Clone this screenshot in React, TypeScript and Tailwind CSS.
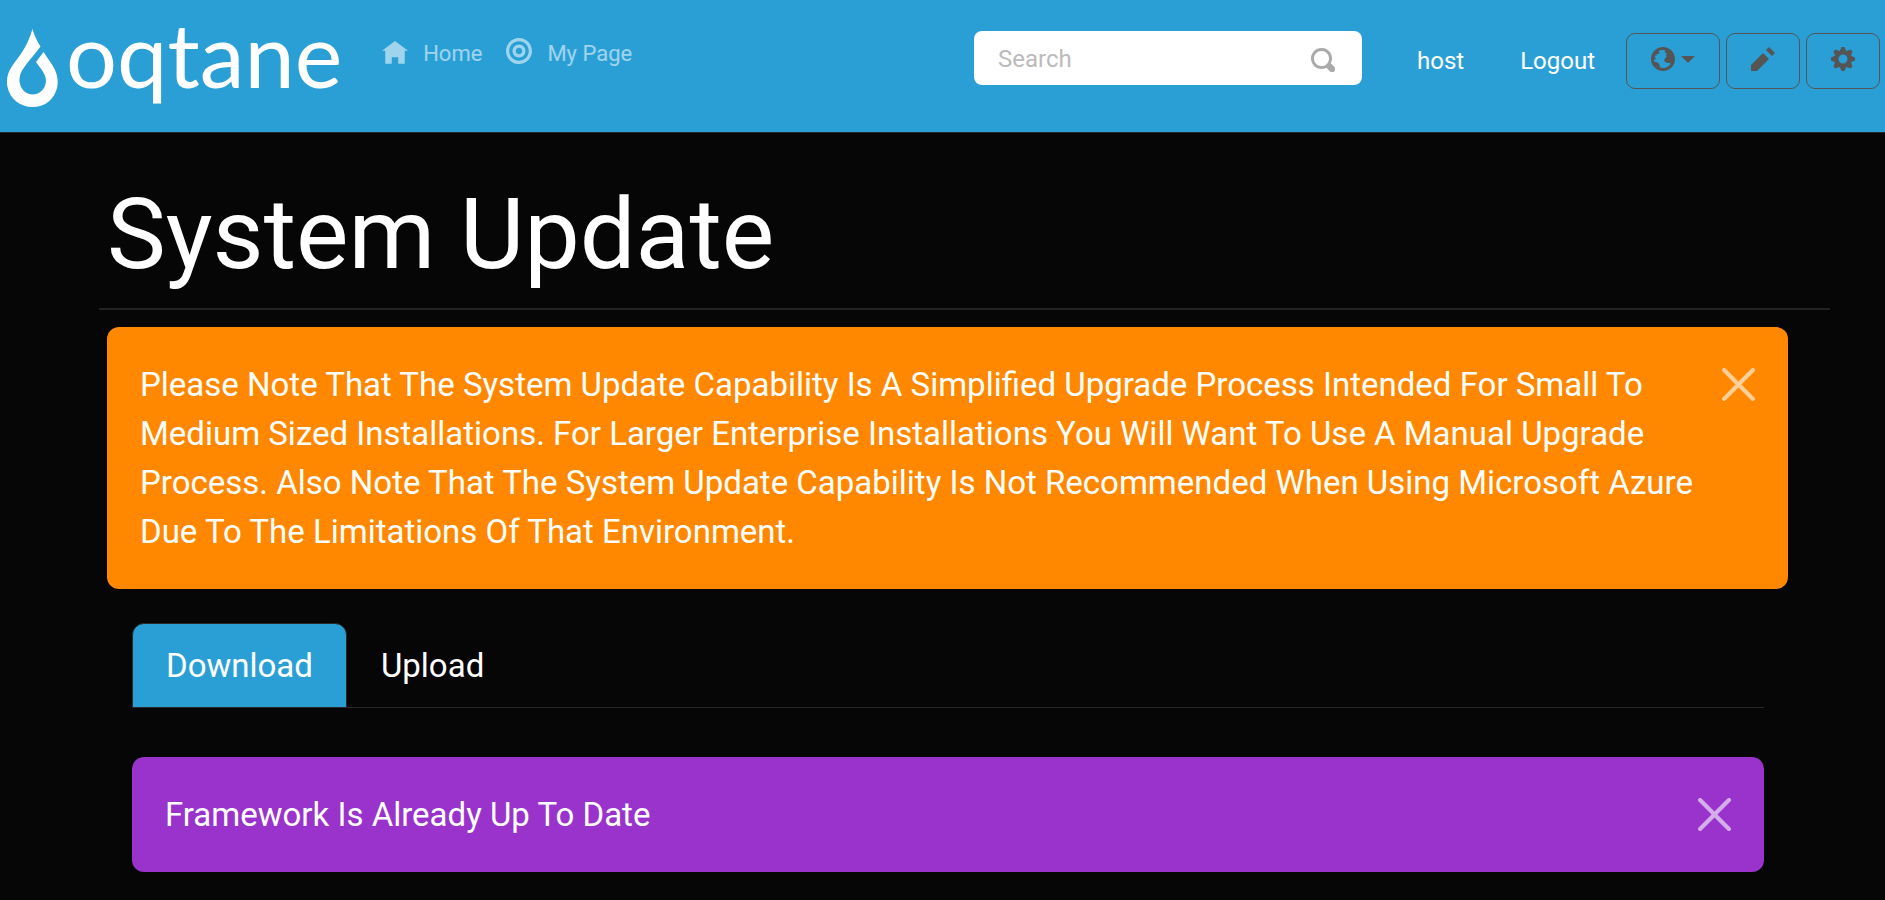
import { useState } from "react";
import type { ReactNode } from "react";

const icons = {
  home: "M4 0l-4 3h1v4h2v-2h2v2h2v-4.03l1 .03-4-3z",
  target:
    "M4 0c-2.2 0-4 1.8-4 4s1.8 4 4 4 4-1.8 4-4-1.8-4-4-4zm0 1c1.66 0 3 1.34 3 3s-1.34 3-3 3-3-1.34-3-3 1.34-3 3-3zm0 1c-1.1 0-2 .9-2 2s.9 2 2 2 2-.9 2-2-.9-2-2-2zm0 1c.56 0 1 .44 1 1s-.44 1-1 1-1-.44-1-1 .44-1 1-1z",
  search:
    "M3.5 0c-1.93 0-3.5 1.57-3.5 3.5s1.57 3.5 3.5 3.5c.59 0 1.17-.14 1.66-.41a1 1 0 0 0 .13.13l1 1a1.02 1.02 0 1 0 1.44-1.44l-1-1a1 1 0 0 0-.16-.13c.27-.49.44-1.06.44-1.66 0-1.93-1.55-3.5-3.5-3.5zm0 1c1.39 0 2.5 1.1 2.5 2.5 0 .66-.24 1.27-.66 1.72-.01.01-.02.02-.03.03a1 1 0 0 0-.13.13c-.44.4-1.04.63-1.69.63-1.39 0-2.5-1.1-2.5-2.5s1.1-2.5 2.5-2.5z",
  globe:
    "M4 0c-2.2 0-4 1.8-4 4s1.8 4 4 4 4-1.8 4-4-1.8-4-4-4zm0 1c.33 0 .64.09.94.19-.21.2-.45.38-.41.56.04.18.69.13.69.5 0 .27-.42.35-.13.66.35.35-.64.98-.66 1.44-.03.83.84.97 1.53.97.42 0 .53.2.5.44-.54.77-1.46 1.25-2.47 1.25-.38 0-.73-.09-1.06-.22.22-.44-.28-1.31-.75-1.59-.23-.23-.72-.14-1-.25-.09-.27-.18-.54-.19-.84.03-.05.08-.09.16-.09.19 0 .45.38.59.34.18-.04-.74-1.31-.31-1.56.2-.12.6.39.47-.16-.12-.51.36-.28.66-.41.26-.11.45-.41.13-.59-.06-.03-.13-.1-.22-.19.45-.27.97-.44 1.53-.44z",
  pencil: "M6 0l-1 1 2 2 1-1-2-2zm-2 2l-4 4v2h2l4-4-2-2z",
  cog: "M3.5 0l-.5 1.19c-.1.03-.19.08-.28.13l-1.19-.5-.72.72.5 1.19c-.05.1-.09.18-.13.28l-1.19.5v1l1.19.5c.04.1.08.18.13.28l-.5 1.19.72.72 1.19-.5c.09.04.18.09.28.13l.5 1.19h1l.5-1.19c.09-.04.19-.08.28-.13l1.19.5.72-.72-.5-1.19c.04-.09.09-.19.13-.28l1.19-.5v-1l-1.19-.5c-.03-.09-.08-.19-.13-.28l.5-1.19-.72-.72-1.19.5c-.09-.04-.19-.09-.28-.13l-.5-1.19h-1zm.5 2.5c.83 0 1.5.67 1.5 1.5s-.67 1.5-1.5 1.5-1.5-.67-1.5-1.5.67-1.5 1.5-1.5z",
};

function Icon({ name, className }: { name: keyof typeof icons; className: string }) {
  return (
    <svg viewBox="0 0 8 8" fill="currentColor" aria-hidden="true" className={className}>
      <path d={icons[name]} />
    </svg>
  );
}

function Logo() {
  return (
    <a href="#home" className="flex h-20 shrink-0 items-start gap-2 text-white">
      <svg viewBox="0 0 52 80" fill="currentColor" aria-hidden="true" className="h-20 w-[52px]">
        <path d="M26.5 1C28.500 8 31 13 34.500 18.500C30 25 23 32 18 39.500C14 45 12.500 51 14 56C16 63 20.500 66 26.500 66.500C33 66.500 38 62 39.500 56C41 50 38.500 46 35.500 41.500L30 34L37.500 24C42 31 46.500 36 49 42C51.500 48 52.500 53 51 60C48 72 38.500 79 26.500 79C14 79 4 71 1.500 59C0 52 1.500 45 5.500 39C9 33.500 14 28 18 21C21.500 15 24 9 26.500 1Z" />
      </svg>
      <span className="font-[Lato,sans-serif] text-[90px] leading-[50px]">oqtane</span>
    </a>
  );
}

function ToolButton({ label, children }: { label: string; children: ReactNode }) {
  return (
    <button
      type="button"
      aria-label={label}
      className="flex h-14 items-center justify-center gap-1.5 rounded-[9px] border border-[#555] px-6 pb-1 text-[#555]"
    >
      {children}
    </button>
  );
}

function Alert({ className, children }: { className: string; children: ReactNode }) {
  const [open, setOpen] = useState(true);
  if (!open) return null;
  return (
    <div role="alert" className={`flex items-start justify-between rounded-xl p-[33px] ${className}`}>
      <p>{children}</p>
      <button type="button" aria-label="Close" onClick={() => setOpen(false)} className="mt-2 shrink-0 text-white/60">
        <svg viewBox="0 0 16 16" fill="currentColor" className="size-[33px]">
          <path d="M.293.293a1 1 0 011.414 0L8 6.586 14.293.293a1 1 0 111.414 1.414L9.414 8l6.293 6.293a1 1 0 01-1.414 1.414L8 9.414l-6.293 6.293a1 1 0 01-1.414-1.414L6.586 8 .293 1.707a1 1 0 010-1.414z" />
        </svg>
      </button>
    </div>
  );
}

export default function App() {
  return (
    <div className="min-h-screen bg-[#060606] font-[Roboto,sans-serif] text-[33px] leading-[49px] text-white">
      <header className="flex h-[133px] items-start border-b border-[#282828] bg-[#2a9fd6] pr-[5px] pl-1.5 text-2xl">
        <div className="pt-7">
          <Logo />
        </div>
        <nav className="ml-10 flex gap-6 pt-[38px] text-[22px] leading-8 text-white/55">
          <a href="#home" className="flex items-start gap-[15px]">
            <Icon name="home" className="mt-[3px] size-[26px]" />
            <span>Home</span>
          </a>
          <a href="#my-page" className="flex items-start gap-[15px]">
            <Icon name="target" className="size-[26px]" />
            <span>My Page</span>
          </a>
        </nav>
        <div className="ml-auto flex items-start pt-[31px]">
          <form role="search" className="flex h-[54px] w-[388px] items-center rounded-lg bg-white pr-[27px] pl-6">
            <input
              type="search"
              aria-label="Search"
              placeholder="Search"
              className="min-w-0 flex-1 pt-0.5 text-[#555] outline-none placeholder:text-[#bbb]"
            />
            <button type="button" aria-label="Run search" className="pt-1 text-[#aaa]">
              <Icon name="search" className="size-6" />
            </button>
          </form>
          <a href="#host" className="ml-[55px] pt-3.5">host</a>
          <a href="#logout" className="ml-14 pt-3.5">Logout</a>
          <div className="ml-[31px] flex gap-1.5 pt-0.5">
            <ToolButton label="Language">
              <Icon name="globe" className="size-6" />
              <svg viewBox="0 0 14 7" fill="currentColor" className="h-[7px] w-3.5">
                <path d="M0 0h14L7 7z" />
              </svg>
            </ToolButton>
            <ToolButton label="Edit page">
              <Icon name="pencil" className="size-6" />
            </ToolButton>
            <ToolButton label="Settings">
              <Icon name="cog" className="size-6" />
            </ToolButton>
          </div>
        </div>
      </header>

      <main className="pt-[38px] pr-[55px] pb-7 pl-[99px]">
        <h1 className="border-b-2 border-[#222] px-2 pt-1 pb-[15px] text-[99px] leading-[118px]">System Update</h1>
        <div className="mt-[17px] mr-[42px] ml-2">
          <Alert className="bg-[#ff8800]">
            <span className="block pr-4">
              Please Note That The System Update Capability Is A Simplified Upgrade Process Intended For Small To Medium
              Sized Installations. For Larger Enterprise Installations You Will Want To Use A Manual Upgrade Process.
              Also Note That The System Update Capability Is Not Recommended When Using Microsoft Azure Due To The
              Limitations Of That Environment.
            </span>
          </Alert>
          <div className="mt-[34px] mr-6 ml-[25px]">
            <div role="tablist" className="flex border-b border-[#282828]">
              <button
                type="button"
                role="tab"
                aria-selected="true"
                className="-mb-px rounded-t-xl border border-[#282828] bg-[#2a9fd6] px-[33px] py-[17px]"
              >
                Download
              </button>
              <button type="button" role="tab" aria-selected="false" className="px-[34px] py-[17px]">
                Upload
              </button>
            </div>
            <div role="tabpanel" className="pt-[49px]">
              <Alert className="bg-[#9933cc]">Framework Is Already Up To Date</Alert>
            </div>
          </div>
        </div>
      </main>
    </div>
  );
}
